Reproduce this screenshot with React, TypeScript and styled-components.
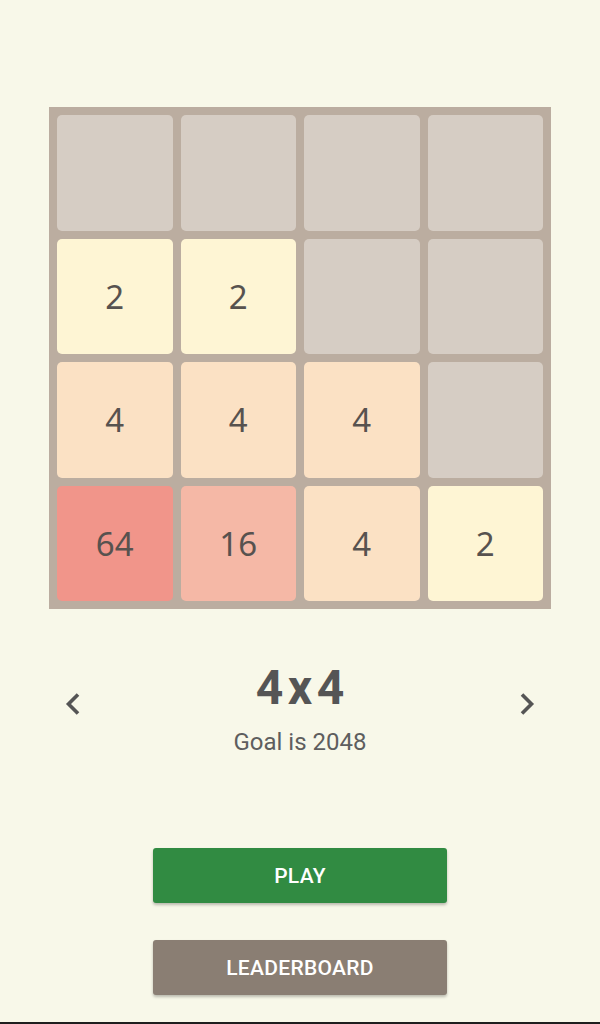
import React from "react";
import styled, { createGlobalStyle } from "styled-components";

const GlobalStyle = createGlobalStyle`
  html, body {
    margin: 0;
    padding: 0;
    background: #f8f8e9;
  }
  body {
    font-family: Roboto, "Noto Sans", sans-serif;
  }
`;

const tileColors: Record<number, string> = {
  0: "#d6cdc4",
  2: "#fef5d4",
  4: "#fbe1c4",
  16: "#f5b8a6",
  64: "#f1958a",
};

const board = [
  [0, 0, 0, 0],
  [2, 2, 0, 0],
  [4, 4, 4, 0],
  [64, 16, 4, 2],
];

const Chevron = ({ dir }: { dir: "left" | "right" }) => (
  <svg width="16" height="24" viewBox="0 0 16 24">
    <polyline
      points={dir === "left" ? "13,2.5 3.5,12 13,21.5" : "3,2.5 12.5,12 3,21.5"}
      fill="none"
      stroke="#555555"
      strokeWidth="3.6"
    />
  </svg>
);

const App = () => {
  return (
    <>
      <GlobalStyle />
      <StyledPage>
        <StyledBoard>
          {board.flat().map((value, i) => (
            <StyledTile key={i} color={tileColors[value]}>
              {value > 0 ? value : ""}
            </StyledTile>
          ))}
        </StyledBoard>
        <StyledSelector>
          <StyledArrow>
            <Chevron dir="left" />
          </StyledArrow>
          <StyledInfo>
            <StyledTitle>4x4</StyledTitle>
            <StyledGoal>Goal is 2048</StyledGoal>
          </StyledInfo>
          <StyledArrow>
            <Chevron dir="right" />
          </StyledArrow>
        </StyledSelector>
        <StyledButtons>
          <StyledButton color="#318b42">PLAY</StyledButton>
          <StyledButton color="#8a7e73">LEADERBOARD</StyledButton>
        </StyledButtons>
      </StyledPage>
      <StyledNavEdge />
    </>
  );
};

const StyledPage = styled.main`
  height: 1022px;
  display: flex;
  flex-direction: column;
  align-items: center;
  padding-top: 107px;
  box-sizing: border-box;
`;

const StyledBoard = styled.div`
  width: 502px;
  height: 502px;
  box-sizing: border-box;
  padding: 8px;
  background: #bbada0;
  display: grid;
  grid-template-columns: repeat(4, 1fr);
  grid-template-rows: repeat(4, 1fr);
  gap: 8px;
`;

const StyledTile = styled.div<{ color: string }>`
  background: ${(p) => p.color};
  border-radius: 5px;
  display: flex;
  align-items: center;
  justify-content: center;
  font-family: "Noto Sans", "Open Sans", sans-serif;
  font-size: 33px;
  color: #57524f;
`;

const StyledSelector = styled.div`
  width: 100%;
  box-sizing: border-box;
  padding: 0 65px;
  margin-top: 51px;
  display: flex;
  justify-content: space-between;
  align-items: flex-start;
`;

const StyledArrow = styled.div`
  margin-top: 32px;
  width: 16px;
  height: 24px;
  display: flex;
`;

const StyledInfo = styled.div`
  display: flex;
  flex-direction: column;
  align-items: center;
`;

const StyledTitle = styled.div`
  font-size: 48px;
  line-height: 56px;
  font-weight: 700;
  letter-spacing: 4.5px;
  margin-right: -4.5px;
  color: #555555;
`;

const StyledGoal = styled.div`
  margin-top: 12px;
  font-size: 24px;
  line-height: 28px;
  color: #5e5e5e;
`;

const StyledButtons = styled.div`
  margin-top: 92px;
  display: flex;
  flex-direction: column;
  gap: 37px;
`;

const StyledButton = styled.button<{ color: string }>`
  width: 294px;
  height: 55px;
  border: none;
  border-radius: 3px;
  background: ${(p) => p.color};
  color: #ffffff;
  font-family: Roboto, sans-serif;
  font-weight: 500;
  font-size: 21px;
  letter-spacing: 0.3px;
  box-shadow: 0 2px 3px rgba(0, 0, 0, 0.25);
  cursor: pointer;
`;

const StyledNavEdge = styled.div`
  height: 2px;
  background: #1e1e1e;
`;

export default App;
